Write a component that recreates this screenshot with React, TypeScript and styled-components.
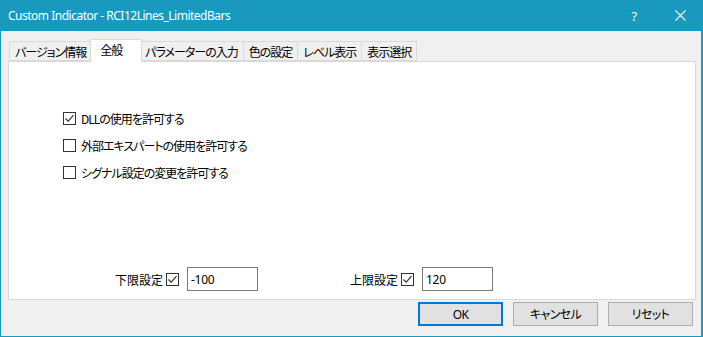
import styled, { createGlobalStyle } from "styled-components";

const Global = createGlobalStyle`
	html, body {
		margin: 0;
		padding: 0;
		background: #ffffff;
	}
	body {
		font-family: "Noto Sans", "Noto Sans CJK JP", sans-serif;
		font-size: 12px;
		color: #000;
		font-feature-settings: "palt";
	}
`;

const Window = styled.div`
	width: 703px;
	height: 337px;
	box-sizing: border-box;
	border: 1px solid #1999be;
	border-top: none;
	border-right-width: 2px;
	background: #f0f0f0;
	display: flex;
	flex-direction: column;
`;

const TitleBar = styled.div`
	height: 31px;
	background: #1999be;
	color: #fff;
	display: flex;
	align-items: center;
	padding-left: 8px;
	font-size: 12px;
	letter-spacing: -0.5px;
	margin: 0 -2px 0 -1px;
`;

const Title = styled.div`
	flex: 1;
	padding-bottom: 1px;
`;

const TitleButton = styled.div`
	width: 46px;
	height: 31px;
	display: flex;
	align-items: center;
	justify-content: center;
	font-size: 13px;
`;

const Body = styled.div`
	flex: 1;
	display: flex;
	flex-direction: column;
	padding: 8px 5px 0 7px;
`;

const TabRow = styled.div`
	display: flex;
	align-items: flex-end;
	height: 22px;
	margin-left: 1px;
	position: relative;
	z-index: 1;
`;

const Tab = styled.div<{ $active?: boolean }>`
	box-sizing: border-box;
	height: 20px;
	padding: 0 5px;
	margin: 0;
	background: #f0f0f0;
	border: 1px solid #d9d9d9;
	border-left: none;
	display: flex;
	align-items: center;
	white-space: nowrap;
	font-family: "Noto Sans CJK JP", sans-serif;
	font-size: 12px;
	letter-spacing: -1px;
	&:first-child {
		border-left: 1px solid #d9d9d9;
	}
	${(p) =>
		p.$active &&
		`
		height: 23px;
		margin: 0 -2px -1px -2px;
		padding: 1px 19px 0 9px;
		align-items: flex-start;
		background: #fff;
		border-bottom: none;
		border-left: 1px solid #d9d9d9;
		position: relative;
	`}
`;

const Panel = styled.div`
	height: 239px;
	box-sizing: border-box;
	background: #fff;
	border: 1px solid #d9d9d9;
	display: flex;
	flex-direction: column;
	padding: 48px 0 8px 54px;
`;

const Checks = styled.div`
	display: flex;
	flex-direction: column;
	gap: 11px;
`;

const CheckRow = styled.label`
	display: flex;
	align-items: center;
	gap: 5px;
	height: 16px;
	font-family: "Noto Sans CJK JP", sans-serif;
	font-size: 12px;
	letter-spacing: -1px;
`;

const Box = styled.span`
	width: 13px;
	height: 13px;
	box-sizing: border-box;
	border: 1px solid #333;
	background: #fff;
	display: inline-flex;
	align-items: center;
	justify-content: center;
	flex-shrink: 0;
`;

const Limits = styled.div`
	margin-top: auto;
	display: flex;
	padding-left: 52px;
`;

const LimitGroup = styled.div`
	width: 235px;
	display: flex;
	align-items: center;
	gap: 3px;
	font-family: "Noto Sans CJK JP", sans-serif;
	font-size: 12px;
`;

const Field = styled.div`
	width: 71px;
	height: 24px;
	box-sizing: border-box;
	border: 1px solid #7a7a7a;
	background: #fff;
	display: flex;
	align-items: center;
	padding-left: 3px;
	margin-left: 5px;
	font-family: "Noto Sans", sans-serif;
	font-size: 12px;
	letter-spacing: -0.3px;
`;

const Footer = styled.div`
	display: flex;
	justify-content: flex-end;
	gap: 10px;
	padding: 2px 3px 0 0;
`;

const Button = styled.div<{ $primary?: boolean }>`
	width: 85px;
	height: 24px;
	box-sizing: border-box;
	background: #e1e1e1;
	border: ${(p) => (p.$primary ? "2px solid #0078d7" : "1px solid #adadad")};
	display: flex;
	align-items: center;
	justify-content: center;
	font-size: 12px;
	letter-spacing: -0.6px;
`;

const Check = ({ on }: { on: boolean }) => (
	<Box>
		{on && (
			<svg width="11" height="11" viewBox="0 0 11 11">
				<path d="M1.5 5.5 L4.2 8.2 L9.5 2.2" fill="none" stroke="#333" strokeWidth="1.2" />
			</svg>
		)}
	</Box>
);

const tabs = ["バージョン情報", "全般", "パラメーターの入力", "色の設定", "レベル表示", "表示選択"];

const options = [
	{ label: "DLLの使用を許可する", on: true },
	{ label: "外部エキスパートの使用を許可する", on: false },
	{ label: "シグナル設定の変更を許可する", on: false },
];

export default function App() {
	return (
		<>
			<Global />
			<Window>
				<TitleBar>
					<Title>Custom Indicator - RCI12Lines_LimitedBars</Title>
					<TitleButton>?</TitleButton>
					<TitleButton>
						<svg width="11" height="11" viewBox="0 0 11 11">
							<path d="M0.5 0.5 L10.5 10.5 M10.5 0.5 L0.5 10.5" stroke="#fff" strokeWidth="1.1" />
						</svg>
					</TitleButton>
				</TitleBar>
				<Body>
					<TabRow>
						{tabs.map((t) => (
							<Tab key={t} $active={t === "全般"}>
								{t}
							</Tab>
						))}
					</TabRow>
					<Panel>
						<Checks>
							{options.map((o) => (
								<CheckRow key={o.label}>
									<Check on={o.on} />
									{o.label}
								</CheckRow>
							))}
						</Checks>
						<Limits>
							<LimitGroup>
								下限設定
								<Check on={true} />
								<Field>-100</Field>
							</LimitGroup>
							<LimitGroup>
								上限設定
								<Check on={true} />
								<Field>120</Field>
							</LimitGroup>
						</Limits>
					</Panel>
					<Footer>
						<Button $primary>OK</Button>
						<Button>キャンセル</Button>
						<Button>リセット</Button>
					</Footer>
				</Body>
			</Window>
		</>
	);
}
